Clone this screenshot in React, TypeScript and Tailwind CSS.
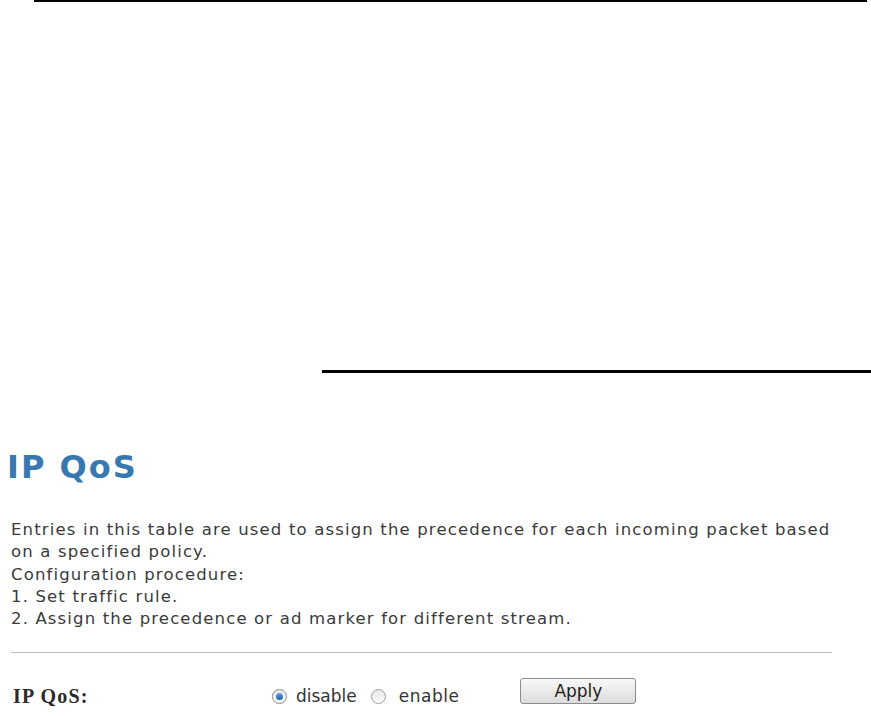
export default function App() {
  return (
    <div className="h-[716px] w-[871px] overflow-hidden bg-white font-['DejaVu_Sans',sans-serif] text-[#333]">
      {/* frame rules */}
      <div className="ml-[34px] h-[2px] w-[833px] bg-black" />
      <div className="ml-[322px] mt-[368px] h-[3px] bg-black" />

      <div className="pl-[7px]">
        <h1 className="mt-[74px] text-[32px] font-bold leading-[40px] tracking-[2px] text-[#3878b0]">IP QoS</h1>
      </div>

      <div className="pl-[11px] pr-[30px]">
        <p className="mt-[32px] text-[16.5px] leading-[22.25px] tracking-[1.15px] text-[#3a3a3a]">
          Entries in this table are used to assign the precedence for each incoming packet based on a specified policy.
          <br />
          Configuration procedure:
          <br />
          1. Set traffic rule.
          <br />
          2. Assign the precedence or ad marker for different stream.
        </p>

        <div className="mt-[22px] h-[1px] w-[821px] bg-[#bdbdbd]" />

        <div className="mt-[28px] flex items-center">
          <div className="w-[261px] pl-[2px] font-['Liberation_Serif',serif] text-[20px] font-bold tracking-[1.2px] text-[#2b2b2b]">IP QoS:</div>
          <label className="flex items-center text-[17px] text-[#333]">
            <span className="flex h-[15px] w-[15px] items-center justify-center rounded-full border border-[#8a8a8a] bg-gradient-to-b from-[#e9e9e9] to-[#fdfdfd]">
              <span className="h-[7px] w-[7px] rounded-full bg-gradient-to-b from-[#5fa6e6] to-[#1c5fa8]" />
            </span>
            <span className="ml-[9px]">disable</span>
          </label>
          <label className="ml-[14px] flex items-center text-[17px] text-[#333]">
            <span className="h-[15px] w-[15px] rounded-full border border-[#a0a0a0] bg-gradient-to-b from-[#e6e6e6] to-[#fcfcfc]" />
            <span className="ml-[13px] tracking-[0.5px]">enable</span>
          </label>
          <button className="ml-[61px] -mt-[10px] h-[26px] w-[116px] rounded-[3px] border border-[#8c8c8c] bg-gradient-to-b from-[#f8f8f8] to-[#dcdcdc] text-[17px] leading-none text-[#222]">
            Apply
          </button>
        </div>
      </div>
    </div>
  );
}
